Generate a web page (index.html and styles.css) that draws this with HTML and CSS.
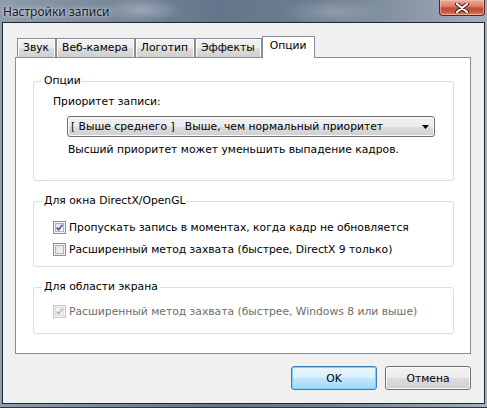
FILE: index.html
```html
<!DOCTYPE html>
<html>
	<head>
		<meta charset="utf-8">
		<title>Настройки записи</title>
		<link rel="stylesheet" href="styles.css">
	</head>
	<body>
		<div class="window">
			<div class="titlebar">
				<span class="title">Настройки записи</span>
				<div class="close">
					<svg width="14" height="10" viewBox="0 0 14 10">
						<path d="M2 1 L12 9 M12 1 L2 9" stroke="#3a1a14" stroke-width="4" stroke-linecap="round"/>
						<path d="M2 1 L12 9 M12 1 L2 9" stroke="#ffffff" stroke-width="2.2" stroke-linecap="round"/>
					</svg>
				</div>
			</div>
			<div class="client">
				<div class="tabs">
					<div class="tab">Звук</div>
					<div class="tab">Веб-камера</div>
					<div class="tab">Логотип</div>
					<div class="tab">Эффекты</div>
					<div class="tab active">Опции</div>
				</div>
				<div class="panel">
					<fieldset class="group first">
						<legend>Опции</legend>
						<div class="label">Приоритет записи:</div>
						<div class="combo">
							<span class="combo-text">[ Выше среднего ]   Выше, чем нормальный приоритет</span>
							<svg width="7" height="4" viewBox="0 0 7 4"><path d="M0 0 H7 L3.5 4 Z" fill="#000"/></svg>
						</div>
						<div class="hint">Высший приоритет может уменьшить выпадение кадров.</div>
					</fieldset>

					<fieldset class="group second">
						<legend>Для окна DirectX/OpenGL</legend>
						<div class="check-row">
							<span class="box">
								<svg width="7" height="7" viewBox="0 0 7 7"><path d="M0.6 3.6 L2.7 5.8 L6.4 0.8" fill="none" stroke="#4a5f8f" stroke-width="1.6"/></svg>
							</span>
							<span>Пропускать запись в моментах, когда кадр не обновляется</span>
						</div>
						<div class="check-row">
							<span class="box"></span>
							<span>Расширенный метод захвата (быстрее, DirectX 9 только)</span>
						</div>
					</fieldset>

					<fieldset class="group third">
						<legend>Для области экрана</legend>
						<div class="check-row disabled">
							<span class="box">
								<svg width="7" height="7" viewBox="0 0 7 7"><path d="M0.6 3.6 L2.7 5.8 L6.4 0.8" fill="none" stroke="#b5b5b5" stroke-width="1.6"/></svg>
							</span>
							<span>Расширенный метод захвата (быстрее, Windows 8 или выше)</span>
						</div>
					</fieldset>
				</div>
				<div class="buttons">
					<div class="btn default">OK</div>
					<div class="btn">Отмена</div>
				</div>
			</div>
		</div>
	</body>
</html>
```

FILE: styles.css
```css
* {
	/* 清除默认边距 */
	margin: 0;
	padding: 0;
	box-sizing: border-box;
}

body {
	width: 487px;
	height: 408px;
	overflow: hidden;
	font-family: "DejaVu Sans", "Noto Sans CJK SC", sans-serif;
	font-size: 10.75px;
	color: #000;
}

.window {
	height: 408px;
	display: flex;
	flex-direction: column;
	padding: 0 2px 3px 2px;
	background: linear-gradient(90deg, #8e9cab 0%, #7b8a9c 20%, #64748a 45%, #6f7f91 65%, #8a98a8 85%, #a3afbc 100%);
	border-bottom: 1px solid #2c3440;
}

.titlebar {
	height: 23px;
	display: flex;
	justify-content: space-between;
	align-items: flex-start;
	background:
		radial-gradient(ellipse 40px 12px at 140px 10px, rgba(200, 210, 222, 0.45), transparent),
		radial-gradient(ellipse 50px 12px at 330px 12px, rgba(190, 200, 214, 0.35), transparent);
}

.title {
	padding: 3px 0 0 1px;
	font-family: "Noto Sans", sans-serif;
	font-size: 12px;
	color: #14202c;
	text-shadow: 0 0 6px rgba(255, 255, 255, 0.7), 0 0 3px rgba(255, 255, 255, 0.6);
}

.close {
	width: 46px;
	height: 16px;
	display: flex;
	justify-content: center;
	align-items: center;
	border: 1px solid #5a261d;
	border-top: none;
	border-radius: 0 0 4px 4px;
	background: linear-gradient(#eaa999 0%, #d98470 40%, #c64c34 55%, #cb573e 80%, #e38d71 100%);
	box-shadow: inset 0 0 0 1px rgba(255, 200, 185, 0.55);
}

.client {
	flex: 1;
	display: flex;
	flex-direction: column;
	background: #f0f0f0;
	border: 1px solid #1f2731;
	padding: 13px 13px 13px 12px;
}

.tabs {
	height: 21px;
	display: flex;
	align-items: flex-start;
	padding-left: 2px;
}

.tab {
	height: 19px;
	margin-top: 2px;
	padding: 2px 6px 0 5px;
	border: 1px solid #898c95;
	border-bottom: none;
	background: linear-gradient(#f2f2f2 0%, #ebebeb 50%, #dddddd 51%, #cfcfcf 100%);
	box-shadow: inset 1px 1px 0 #fcfcfc, inset -1px 0 0 #fcfcfc;
	white-space: nowrap;
}

.tab.active {
	/* 选中的标签盖住面板上边框 */
	position: relative;
	z-index: 1;
	height: 22px;
	margin: 0 -2px 0 0;
	padding: 2px 7px 0 7px;
	background: #fff;
	box-shadow: none;
}

.panel {
	height: 297px;
	background: #fff;
	border: 1px solid #898c95;
	padding: 16px 16px 0 17px;
}

.group {
	border: 1px solid #d5dfe5;
	border-radius: 3px;
	padding: 0 8px 0 19px;
}

.group legend {
	margin-left: -11px;
	padding: 0 1px 0 2px;
	line-height: 14px;
}

.group.first {
	padding-bottom: 23px;
}

.group.second {
	margin-top: 13px;
	padding-bottom: 9px;
}

.group.third {
	margin-top: 13px;
	padding-bottom: 14px;
}

.label {
	margin-top: 7px;
	line-height: 14px;
}

.combo {
	width: 368px;
	height: 21px;
	margin: 7px 0 0 14px;
	display: flex;
	justify-content: space-between;
	align-items: center;
	padding: 0 5px 0 3px;
	border: 1px solid #707070;
	border-radius: 3px;
	background: linear-gradient(#f2f2f2 0%, #ebebeb 50%, #dddddd 51%, #cfcfcf 100%);
	box-shadow: inset 0 0 0 1px #fbfbfb;
}

.combo-text {
	white-space: pre;
}

.hint {
	margin: 6px 0 0 15px;
	line-height: 14px;
}

.check-row {
	height: 16px;
	display: flex;
	align-items: center;
	gap: 3px;
	margin-top: 6px;
}

.second legend + .check-row {
	margin-top: 11px;
}

.third legend + .check-row {
	margin-top: 9px;
}

.box {
	width: 13px;
	height: 13px;
	flex: none;
	display: flex;
	justify-content: center;
	align-items: center;
	border: 1px solid #8e8f8f;
	background: #f4f4f4;
	box-shadow: inset 0 0 0 1px #f4f4f4, inset 0 0 0 2px #aeb3b9;
	background-image: linear-gradient(135deg, #d9dce0 10%, #fbfbfb 90%);
}

.disabled {
	color: #6d6d6d;
}

.disabled .box {
	border-color: #c6c6c6;
	background: #f4f4f4;
	box-shadow: inset 0 0 0 1px #f4f4f4, inset 0 0 0 2px #dadada;
}

.buttons {
	display: flex;
	justify-content: flex-end;
	gap: 8px;
	margin-top: 12px;
}

.btn {
	width: 86px;
	height: 24px;
	display: flex;
	justify-content: center;
	align-items: center;
	border: 1px solid #707070;
	border-radius: 3px;
	background: linear-gradient(#f2f2f2 0%, #ebebeb 50%, #dddddd 51%, #cfcfcf 100%);
	box-shadow: inset 0 0 0 1px #fcfcfc;
}

.btn.default {
	border-color: #3c7fb1;
	background: linear-gradient(#eaf6fd 0%, #d9f0fc 50%, #bee6fd 51%, #a7d9f5 100%);
	box-shadow: inset 0 0 0 1px #7fd0f9;
}
```
